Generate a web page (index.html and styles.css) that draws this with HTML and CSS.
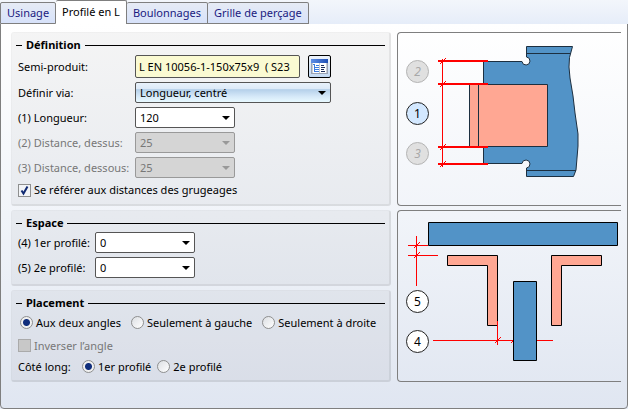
FILE: index.html
```html
<!DOCTYPE html>
<html lang="fr">
  <head>
    <meta charset="UTF-8" />
    <meta name="viewport" content="width=device-width, initial-scale=1.0" />
    <title>Profilé en L</title>
    <link rel="stylesheet" href="styles.css">
  </head>
  <body>
    <nav class="tabs">
      <button class="tab" type="button">Usinage</button>
      <button class="tab active" type="button">Profilé en L</button>
      <button class="tab" type="button">Boulonnages</button>
      <button class="tab" type="button">Grille de perçage</button>
    </nav>
    <main class="page">
      <form class="groups">
        <section class="group definition">
          <h2 class="title">Définition</h2>
          <div class="fields">
            <label for="product">Semi-produit:</label>
            <div class="product">
              <input class="text" id="product" type="text" value="L EN 10056-1-150x75x9  ( S23" />
              <button class="catalog" type="button" aria-label="Catalogue">
                <svg width="17" height="17" viewBox="0 0 17 17">
                  <defs>
                    <linearGradient id="bar">
                      <stop offset="0" stop-color="#5f8fe6" />
                      <stop offset="1" stop-color="#1f4fb4" />
                    </linearGradient>
                  </defs>
                  <rect x="0.5" y="1.5" width="16" height="14" fill="#c9cdd4" stroke="#9aa3b5" />
                  <path d="M2 5h6v10H2zM9 5h6v10H9z" fill="#fff" />
                  <rect x="0" y="1" width="17" height="4" fill="url(#bar)" />
                  <path d="M3.5 6v8M2 6.5h2M5 7.5h3M4 9.5h4M4 11.5h4M4 13.5h4" stroke="#3a7be0" fill="none" />
                  <path d="M10 7.5h3M10 9.5h4M10 11.5h3M10 13.5h4" stroke="#1d2f5c" />
                </svg>
              </button>
            </div>
            <label for="via">Définir via:</label>
            <div class="combo wide">
              <select id="via"><option>Longueur, centré</option></select>
            </div>
            <label for="length">(1) Longueur:</label>
            <div class="combo">
              <select id="length"><option>120</option></select>
            </div>
            <label class="off" for="above">(2) Distance, dessus:</label>
            <div class="combo off">
              <select id="above" disabled><option>25</option></select>
            </div>
            <label class="off" for="below">(3) Distance, dessous:</label>
            <div class="combo off">
              <select id="below" disabled><option>25</option></select>
            </div>
          </div>
          <label class="choice check-row"><input type="checkbox" checked />Se référer aux distances des grugeages</label>
        </section>

        <section class="group space">
          <h2 class="title">Espace</h2>
          <div class="fields">
            <label for="first">(4) 1er profilé:</label>
            <div class="combo">
              <select id="first"><option>0</option></select>
            </div>
            <label for="second">(5) 2e profilé:</label>
            <div class="combo">
              <select id="second"><option>0</option></select>
            </div>
          </div>
        </section>

        <section class="group placement">
          <h2 class="title">Placement</h2>
          <div class="row angles">
            <label class="choice"><input type="radio" name="angle" checked />Aux deux angles</label>
            <label class="choice"><input type="radio" name="angle" />Seulement à gauche</label>
            <label class="choice"><input type="radio" name="angle" />Seulement à droite</label>
          </div>
          <div class="row">
            <label class="choice off"><input type="checkbox" disabled />Inverser l’angle</label>
          </div>
          <div class="row sides">
            <span class="caption">Côté long:</span>
            <label class="choice"><input type="radio" name="side" checked />1er profilé</label>
            <label class="choice"><input type="radio" name="side" />2e profilé</label>
          </div>
        </section>
      </form>

      <div class="pictures">
        <div class="picture side-view">
          <svg width="220" height="160" viewBox="0 0 220 160">
            <g stroke="#1c2f40">
              <path d="M85.5 28.5H124A4 4 0 1 0 128.5 24V13.5H174.5L171.5 24.5L171 34L172 45L175 63L177 80L180 101V113L178 137L175.5 143.5H128.5V135A4 4 0 1 0 124 130.5H85.5Z" fill="#5293c7" />
              <path d="M128.5 20.5H172.5M128.5 137.5H178" />
              <path d="M71.5 51.5H149.5V113.5H71.5Z" fill="#ffa793" />
              <path d="M80.5 51.5V113.5" />
            </g>
            <g stroke="#f00" fill="none">
              <path d="M40 28H90M40 51H90M40 114H90M40 131H90" stroke-width="2" />
              <path d="M44.5 26V134M42 31L48 25M42 54L48 48M42 117L48 111M42 134L48 128" />
            </g>
            <g class="mark off"><circle cx="19.5" cy="38.5" r="11" /><text x="19.5" y="43">2</text></g>
            <g class="mark on"><circle cx="19.5" cy="80.5" r="11" /><text x="19.5" y="85">1</text></g>
            <g class="mark off"><circle cx="19.5" cy="120.5" r="11" /><text x="19.5" y="125">3</text></g>
          </svg>
        </div>
        <div class="picture top-view">
          <svg width="221" height="160" viewBox="0 0 221 160">
            <path d="M10 34.5H30M10 44.5H40M18.5 25V75M16 37L22 31M16 47L22 41M35 129.5H155M97 132L103 126M113 132L119 126" stroke="#f00" />
            <g stroke="#000">
              <path d="M30.5 11.5H219.5V34.5H30.5Z" fill="#5293c7" />
              <path d="M49.5 44.5H99.5V114.5H89.5V54.5H49.5Z" fill="#ffa793" />
              <path d="M153.5 44.5H203.5V54.5H163.5V114.5H153.5Z" fill="#ffa793" />
              <path d="M115.5 70.5H138.5V149.5H115.5Z" fill="#5293c7" />
            </g>
            <path d="M99.5 110V134" stroke="#f00" />
            <g class="mark"><circle cx="19.5" cy="90.5" r="11" /><text x="19.5" y="95">5</text></g>
            <g class="mark"><circle cx="19.5" cy="130.5" r="11" /><text x="19.5" y="135">4</text></g>
          </svg>
        </div>
      </div>
    </main>
  </body>
</html>
```

FILE: styles.css
```css
* {
  box-sizing: border-box;
  margin: 0;
  padding: 0;
}
body {
  min-height: 100vh;
  display: flex;
  flex-direction: column;
  background: #e9eef8;
  color: #000;
  font: 11px/16px "Noto Sans", "Open Sans", sans-serif;
}
button,
input,
select {
  font: inherit;
  color: inherit;
}

/* tabs */
.tabs {
  position: relative;
  z-index: 1;
  height: 24px;
  display: flex;
  align-items: flex-end;
  background: linear-gradient(#f3f6fb, #e6edf9);
}
.tab {
  height: 22px;
  padding: 0 6px;
  border: 1px solid #7f7f7f;
  border-left-width: 0;
  border-radius: 2px 2px 0 0;
  background: linear-gradient(#e6ebf5, #d7e2fa);
  color: #1a1a80;
  white-space: nowrap;
}
.tab:first-child {
  border-left-width: 1px;
}
.tab.active {
  height: 24px;
  padding-bottom: 2px;
  border-bottom: 0;
  background: #fff;
  color: #000;
}

.page {
  flex: 1;
  display: flex;
  align-items: flex-start;
  gap: 6px;
  margin-top: -1px;
  padding: 8px 6px 24px 10px;
  border: 1px solid #7f7f7f;
  border-radius: 0 0 4px 4px;
  background: linear-gradient(#fff, #f1f4f9 50%, #e0e6f1);
}

/* left side */
.groups {
  flex: 1;
  display: flex;
  flex-direction: column;
  gap: 4px;
}
.group {
  padding: 5px 4px 0;
  border: 1px solid rgba(0, 0, 0, 0.06);
  border-right: 2px solid rgba(0, 0, 0, 0.1);
  border-bottom: 2px solid rgba(0, 0, 0, 0.1);
  border-radius: 3px;
  background: rgba(0, 0, 0, 0.04);
  background-clip: padding-box;
}
.definition {
  min-height: 174px;
}
.space {
  min-height: 76px;
}
.placement {
  min-height: 92px;
}
.title {
  display: flex;
  align-items: center;
  gap: 4px;
  font-size: 11px;
  line-height: 14px;
}
.title::before,
.title::after {
  content: "";
  width: 6px;
  height: 1px;
  background: #000;
}
.title::after {
  flex: 1;
}
.fields {
  display: grid;
  grid-template-columns: 117px 1fr;
  row-gap: 4px;
  align-items: center;
  padding: 3px 0 0 2px;
}
.space .fields {
  grid-template-columns: 77px 1fr;
  padding-top: 2px;
}
.fields label {
  white-space: nowrap;
}
.product {
  display: flex;
  gap: 8px;
}
.text {
  width: 165px;
  height: 23px;
  padding: 0 0 0 3px;
  border: 1px solid #555;
  border-radius: 2px;
  background: #fafad2;
  white-space: pre;
}
.catalog {
  width: 23px;
  height: 23px;
  display: grid;
  place-items: center;
  border: 1px solid #000;
  border-radius: 2px;
  background: linear-gradient(#eef4fc, #c3d9f2);
}
.combo {
  width: 100px;
  display: grid;
  align-items: center;
}
.combo::after {
  content: "";
  grid-area: 1 / 1;
  justify-self: end;
  margin-right: 5px;
  border: 4px solid transparent;
  border-top-color: currentColor;
  border-bottom-width: 0;
  pointer-events: none;
}
.combo.wide {
  width: 196px;
}
select {
  grid-area: 1 / 1;
  width: 100%;
  height: 21px;
  padding: 0 4px;
  appearance: none;
  border: 1px solid #555;
  border-radius: 2px;
  background: #fff;
}
.wide select {
  background: linear-gradient(#e9f2fb, #dce9f7 30%, #b5d0ea 35%, #d5e8f8 70%, #e8f9ff);
}
.off {
  color: #777;
}
.combo.off {
  color: #999;
}
.combo.off select {
  border-color: #999;
  background: #d5d5d5;
  color: #777;
  opacity: 1;
}

/* tick boxes and radios */
.choice {
  display: flex;
  align-items: center;
  gap: 3px;
  white-space: nowrap;
}
.choice input {
  width: 13px;
  height: 13px;
  appearance: none;
  border: 1px solid #8e8f8f;
  background: linear-gradient(135deg, #dcdfe3, #fff);
}
.choice input[type="checkbox"]:checked {
  background: url("data:image/svg+xml,%3Csvg xmlns='http://www.w3.org/2000/svg' viewBox='0 0 11 11'%3E%3Cpath d='M2.5 5.5L4.5 8.5L8.5 1.5' fill='none' stroke='%23102a72' stroke-width='2'/%3E%3C/svg%3E"), #f2f4f7;
}
.choice input:disabled {
  background: #c8c8c8;
  border-color: #aaa;
}
.choice input[type="radio"] {
  border-radius: 50%;
}
.choice input[type="radio"]:checked {
  background: radial-gradient(circle, #102e7c 3px, #f0f0f0 4px);
}
.check-row {
  padding: 4px 2px;
}
.row {
  height: 21px;
  display: flex;
  align-items: center;
  padding-left: 2px;
}
.angles {
  gap: 10px;
  height: 25px;
  padding-left: 4px;
}
.sides {
  gap: 6px;
}
.caption {
  width: 58px;
}

/* right side */
.pictures {
  display: flex;
  flex-direction: column;
  gap: 4px;
}
.picture {
  width: 224px;
  border: 1px solid #7f7f7f;
  border-right: 0;
  border-radius: 4px 0 0 4px;
}
.picture svg {
  display: block;
}
.side-view {
  min-height: 174px;
}
.top-view {
  min-height: 172px;
}
.mark circle {
  fill: #fff;
  stroke: #222;
}
.mark text {
  font-size: 12px;
  text-anchor: middle;
}
.mark.on circle {
  fill: #d3e8ff;
}
.mark.off circle {
  fill: #e0e0e0;
  stroke: #b4b4b4;
}
.mark.off text {
  fill: #a8a8a8;
  font-style: italic;
}
```
